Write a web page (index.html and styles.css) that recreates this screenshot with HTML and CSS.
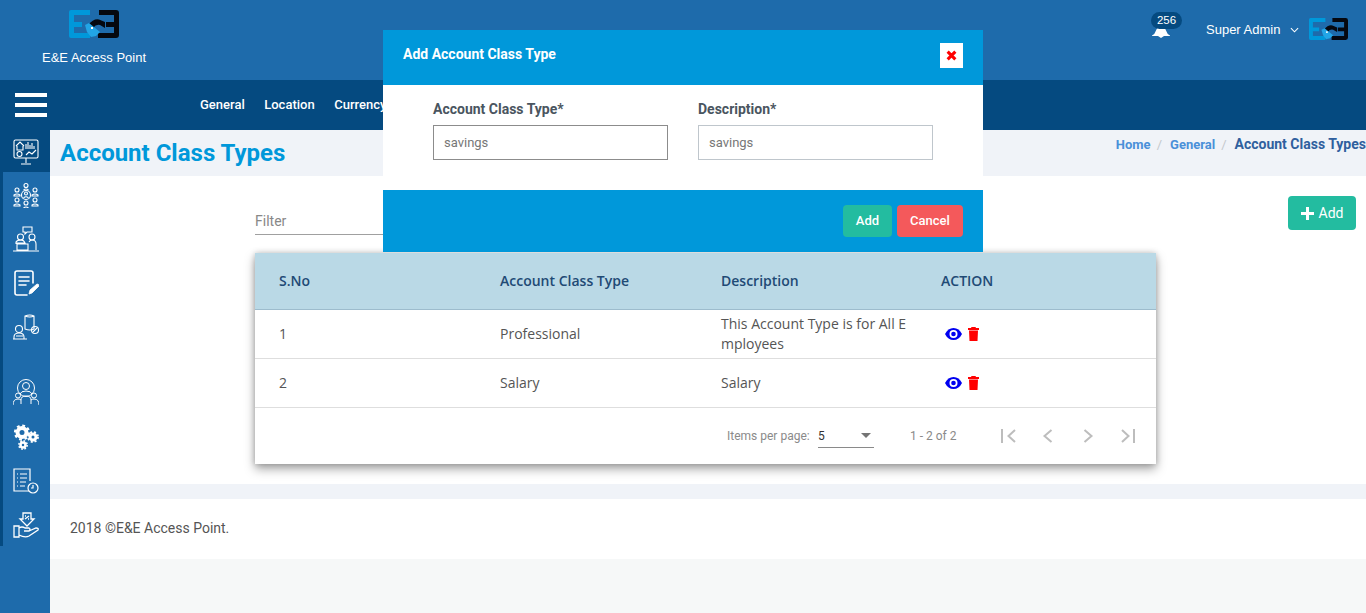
FILE: index.html
```html
<!DOCTYPE html>
<html lang="en">
<head>
<meta charset="utf-8">
<title>Account Class Types</title>
<link rel="stylesheet" href="styles.css">
</head>
<body>
<svg class="defs" width="0" height="0" aria-hidden="true">
  <symbol id="logo" viewBox="0 0 50 28">
    <path d="M21 0H2Q0 0 0 2V26Q0 28 2 28H21V23H5V17H13V12H5V5H21Z" fill="#0098da"/>
    <path d="M30 0H47Q50 0 50 3V25Q50 28 47 28H29V23H45V17H37V12H45V5H30Z" fill="#05080f"/>
    <path d="M19 15Q25 8 30 9.500L36 12L36 18L31 15Q27 14 24 18Z" fill="#05080f"/>
    <path d="M16 15L20 13L31 22L27 26L22 27L18 22Z" fill="#22a5e6"/>
    <path d="M22 17h2v2h-2z" fill="#fff"/>
  </symbol>
</svg>

<header class="topbar">
  <div class="brand">
    <svg class="brand-logo"><use href="#logo"/></svg>
    <span class="brand-name">E&amp;E Access Point</span>
  </div>
  <div class="top-right">
    <div class="bell">
      <svg class="bell-icon" viewBox="0 0 18 11"><path d="M0 8.500Q3 7 4 3.500Q5 0 9 0Q13 0 14 3.500Q15 7 18 8.500V9H0Z" fill="#fff"/><path d="M6 9h6L9 11Z" fill="#fff"/></svg>
      <span class="badge">256</span>
    </div>
    <span class="user">Super Admin</span>
    <svg class="chev" viewBox="0 0 10 6"><path d="M1 1l4 4 4-4" fill="none" stroke="#fff" stroke-width="1.2"/></svg>
    <svg class="user-logo"><use href="#logo"/></svg>
  </div>
</header>

<nav class="navbar">
  <div class="burger"><i></i><i></i><i></i></div>
  <ul class="menu">
    <li>General</li>
    <li>Location</li>
    <li>Currency</li>
  </ul>
</nav>

<div class="layout">
  <aside class="sidebar">
    <div class="side-first">
      <svg class="ico" viewBox="0 0 26 26" fill="none" stroke="#fff" stroke-width="1.1"><rect x="1" y="1" width="24" height="18" rx="1.5"/><path d="M3 7l4-4 4 4M4 7v4h6V7M13 10V5M15 10V3M17 10V6M19 10V4M21 10V7M13 16l3-3 3 2 4-4M4 15a2.500 2.500 0 1 0 5 0a2.500 2.500 0 1 0-5 0M8 25h10M13 19v5"/></svg>
    </div>
    <div class="side-list">
      <div class="side-item"><svg class="ico" viewBox="0 0 26 26" fill="none" stroke="#fff" stroke-width="1.1"><circle cx="13" cy="13" r="4.500"/><circle cx="13" cy="11.500" r="1.500"/><path d="M10.500 16q2.500-2.500 5 0"/><circle cx="13" cy="3.500" r="2"/><path d="M10.500 8q2.500-2 5 0"/><circle cx="4" cy="8" r="2"/><path d="M1 13q3-2 6 0v1H1z"/><circle cx="22" cy="8" r="2"/><path d="M19 13q3-2 6 0v1h-6z"/><circle cx="4" cy="18" r="2"/><path d="M1 23q3-2 6 0v1H1z"/><circle cx="22" cy="18" r="2"/><path d="M19 23q3-2 6 0v1h-6z"/><circle cx="13" cy="21" r="2"/><path d="M10.500 26q2.500-2 5 0"/></svg></div>
      <div class="side-item"><svg class="ico" viewBox="0 0 26 26" fill="none" stroke="#fff" stroke-width="1.1"><path d="M10 1h9v5h-5l-2 2V6h-2z"/><circle cx="7.500" cy="11" r="3"/><circle cx="19" cy="11" r="3"/><path d="M3 18v-2q1-2 5-2 3 0 4 3h-9M16 16q1-2 3-2 4 0 4 4v6M4 18h11v6H4zM0 25h26"/></svg></div>
      <div class="side-item"><svg class="ico" viewBox="0 0 26 26" fill="none" stroke="#fff" stroke-width="1.6"><path d="M14 25H4Q2 25 2 23V3Q2 1 4 1H18Q20 1 20 3V13" stroke-linecap="round"/><path d="M6 7h10M6 11h10M6 15h7" stroke-linecap="round"/><path d="M16 24l1-4 7-6q2 0 2 2l-7 7z" fill="#fff" stroke-width=".8"/></svg></div>
      <div class="side-item"><svg class="ico" viewBox="0 0 26 26" fill="none" stroke="#fff" stroke-width="1.1"><path d="M12 2q5-2 9 0v13q-4 2-9 0zM12 2q5 2 9 0"/><circle cx="22" cy="16" r="3.500"/><path d="M20 18l4-4"/><circle cx="6" cy="15" r="3.500"/><path d="M1 25v-2q0-4 5-4t5 4v2zM0 25h14M3 22h7"/></svg></div>
      <div class="side-item group-two"><svg class="ico" viewBox="0 0 26 26" fill="none" stroke="#fff" stroke-width="1"><circle cx="13" cy="9" r="8.500"/><circle cx="13" cy="7" r="3.500"/><path d="M7 15q1-3 6-3t6 3M8 25v-4q0-4 5-4t5 4v4M0 26q0-6 5-6 2 0 3 1M26 26q0-6-5-6-2 0-3 1"/><circle cx="5" cy="16.500" r="2.500"/><circle cx="21" cy="16.500" r="2.500"/></svg></div>
      <div class="side-item after-two"><svg class="ico" viewBox="0 0 26 26"><g fill="none" stroke="#fff"><circle cx="9" cy="8.500" r="4.500" stroke-width="4"/><circle cx="9" cy="8.500" r="7" stroke-width="2.200" stroke-dasharray="2.800 2.700"/><circle cx="20" cy="13" r="3" stroke-width="3"/><circle cx="20" cy="13" r="5" stroke-width="1.800" stroke-dasharray="2 2"/><circle cx="10" cy="21" r="2.500" stroke-width="2.500"/><circle cx="10" cy="21" r="4.200" stroke-width="1.500" stroke-dasharray="1.700 1.600"/></g></svg></div>
      <div class="side-item"><svg class="ico" viewBox="0 0 26 26" fill="none" stroke="#fff" stroke-width="1.200"><path d="M16 23H1V1h16v12"/><path d="M4 6h1M4 10h1M4 14h1M4 18h1M7 6h7M7 10h7M7 14h6M7 18h5"/><circle cx="20" cy="20" r="5"/><path d="M20 17v3h-2"/></svg></div>
      <div class="side-item"><svg class="ico" viewBox="0 0 26 26" fill="none" stroke="#fff" stroke-width="1.300"><path d="M10 1h8v6h3l-7 7-7-7h3z"/><path d="M12 7l4-3M12 4h1M15 7h1"/><path d="M1 14h5v11H1zM6 16q3-2 6 0h4q2 1 0 3h-5M6 23q6 3 10 1l9-6q1-2-2-2l-7 3"/></svg></div>
    </div>
  </aside>

  <main class="main">
    <div class="title-band">
      <h1 class="page-title">Account Class Types</h1>
      <ol class="crumbs">
        <li class="crumb">Home</li>
        <li class="sep">/</li>
        <li class="crumb">General</li>
        <li class="sep">/</li>
        <li class="crumb-now">Account Class Types</li>
      </ol>
    </div>

    <section class="content">
      <div class="tools">
        <div class="filter">Filter</div>
        <button class="add-btn" type="button"><svg class="plus" viewBox="0 0 13 13"><path d="M5 0h3v5h5v3H8v5H5V8H0V5h5z" fill="#fff"/></svg>Add</button>
      </div>

      <div class="card">
        <div class="row head">
          <div>S.No</div><div>Account Class Type</div><div>Description</div><div>ACTION</div>
        </div>
        <div class="row">
          <div>1</div><div>Professional</div><div class="desc">This Account Type is for All Employees</div>
          <div class="actions">
            <svg class="eye" viewBox="0 0 17 12"><path d="M8.500 0Q14 0 17 6Q14 12 8.500 12Q3 12 0 6Q3 0 8.500 0Z" fill="#0000f0"/><circle cx="8.500" cy="6" r="4" fill="#fff"/><circle cx="8.500" cy="6" r="2.300" fill="#0000f0"/></svg>
            <svg class="bin" viewBox="0 0 11 14"><path d="M3.500 0h4l.5 1h3v2H0V1h3zM1 3.500h9L9.500 14h-8z" fill="#f00"/></svg>
          </div>
        </div>
        <div class="row">
          <div>2</div><div>Salary</div><div class="desc">Salary</div>
          <div class="actions">
            <svg class="eye" viewBox="0 0 17 12"><path d="M8.500 0Q14 0 17 6Q14 12 8.500 12Q3 12 0 6Q3 0 8.500 0Z" fill="#0000f0"/><circle cx="8.500" cy="6" r="4" fill="#fff"/><circle cx="8.500" cy="6" r="2.300" fill="#0000f0"/></svg>
            <svg class="bin" viewBox="0 0 11 14"><path d="M3.500 0h4l.5 1h3v2H0V1h3zM1 3.500h9L9.500 14h-8z" fill="#f00"/></svg>
          </div>
        </div>
        <div class="pager">
          <span class="pg-label">Items per page:</span>
          <div class="pg-select"><span>5</span><i class="caret"></i></div>
          <span class="pg-range">1 - 2 of 2</span>
          <div class="pg-btns">
            <svg viewBox="0 0 16 14"><rect x="1" y="0" width="2" height="14" fill="#bdbdbd"/><path d="M15 1L8.500 7 15 13" fill="none" stroke="#bdbdbd" stroke-width="2"/></svg>
            <svg viewBox="0 0 16 14"><path d="M11.500 1L4.500 7l7 6" fill="none" stroke="#bdbdbd" stroke-width="2"/></svg>
            <svg viewBox="0 0 16 14"><path d="M4.500 1l7 6-7 6" fill="none" stroke="#bdbdbd" stroke-width="2"/></svg>
            <svg viewBox="0 0 16 14"><path d="M2 1l6.500 6L2 13" fill="none" stroke="#bdbdbd" stroke-width="2"/><rect x="13" y="0" width="2" height="14" fill="#bdbdbd"/></svg>
          </div>
        </div>
      </div>
    </section>

    <div class="foot-band"></div>
    <footer class="footer">2018 ©E&amp;E Access Point.</footer>
    <div class="page-end"></div>
  </main>
</div>

<div class="modal">
  <div class="modal-head">
    <h2 class="modal-title">Add Account Class Type</h2>
    <button class="close" type="button"><svg viewBox="0 0 10 10"><path d="M1.500 1.500l7 7M8.500 1.500l-7 7" stroke="#f00" stroke-width="2.800"/></svg></button>
  </div>
  <div class="modal-body">
    <label class="field">
      <span class="field-label">Account Class Type*</span>
      <input class="input focus" type="text" value="savings">
    </label>
    <label class="field">
      <span class="field-label">Description*</span>
      <input class="input" type="text" value="savings">
    </label>
  </div>
  <div class="modal-foot">
    <button class="btn ok" type="button">Add</button>
    <button class="btn cancel" type="button">Cancel</button>
  </div>
</div>
</body>
</html>
```
FILE: styles.css
```css
* { box-sizing: border-box; }
html, body { margin: 0; height: 613px; overflow: hidden; }
body { font-family: Roboto, "Liberation Sans", sans-serif; background: #f6f8f8; position: relative; }
.defs { position: absolute; }

.topbar { height: 80px; background: #1e6bab; display: flex; justify-content: space-between; color: #fff; }
.brand { width: 188px; display: flex; flex-direction: column; align-items: center; padding-top: 10px; }
.brand-logo { width: 50px; height: 28px; display: block; }
.brand-name { font-family: "Liberation Sans", Arial, sans-serif; font-size: 13px; line-height: 16px; margin-top: 12px; }
.top-right { display: flex; align-items: flex-start; padding: 12px 18px 0 0; }
.bell { width: 31px; height: 27px; position: relative; margin-right: 24px; }
.badge { display: block; position: relative; width: 31px; height: 17px; border-radius: 9px; background: #054a80; font-family: "Liberation Sans", Arial, sans-serif; font-size: 11.500px; line-height: 17px; text-align: center; }
.bell-icon { position: absolute; left: 1px; top: 15px; width: 18px; height: 11px; }
.user { font-family: "Liberation Sans", Arial, sans-serif; font-size: 13px; line-height: 16px; margin-top: 10px; width: 83px; white-space: nowrap; }
.chev { width: 9px; height: 6px; margin: 15px 0 0 1px; }
.user-logo { width: 39px; height: 22px; margin: 6px 0 0 10px; }

.navbar { height: 50px; background: #054a80; display: flex; align-items: center; color: #fff; }
.burger { width: 32px; margin-left: 15px; display: flex; flex-direction: column; gap: 6px; }
.burger i { display: block; height: 4px; background: #fff; }
.menu { list-style: none; margin: 0 0 0 153px; padding: 0; display: flex; gap: 19.500px; font-size: 13px; font-weight: 500; line-height: 16px; }

.layout { display: flex; height: 483px; }
.sidebar { width: 50px; flex: none; background: #1e6bab; }
.side-first { height: 42px; background: #054a80; display: flex; align-items: center; padding: 2px 0 0 13px; }
.side-list { height: 374px; border-left: 3px solid #054a80; padding-top: 1px; }
.side-item { height: 44px; display: flex; align-items: center; padding-left: 10px; }
.side-item.group-two { margin-top: 21px; }
.side-item.after-two { margin-top: 1px; }
.ico { width: 26px; height: 26px; display: block; }

.main { flex: 1; min-width: 0; display: flex; flex-direction: column; }
.title-band { height: 46px; background: #f0f3f8; display: flex; justify-content: space-between; padding-left: 10px; }
.page-title { margin: 6px 0 0; font-size: 24px; line-height: 34px; font-weight: 700; color: #0098da; }
.crumbs { list-style: none; margin: 0; padding: 6px 0 0; display: flex; font-size: 13px; line-height: 17px; font-weight: 700; white-space: nowrap; }
.crumb { color: #4a90d9; }
.sep { color: #c4c8cc; font-weight: 400; margin: 0 8px 0 6px; }
.crumb-now { color: #2f5f9e; font-size: 14px; }

.content { height: 308px; background: #fff; display: flex; flex-direction: column; }
.tools { height: 77px; position: relative; display: flex; justify-content: space-between; padding: 20px 10px 0 205px; }
.filter { width: 130px; height: 39px; border-bottom: 1px solid #a0a0a0; font-family: Roboto, sans-serif; font-size: 14px; color: #888; padding-top: 16px; line-height: 18px; }
.add-btn { width: 68px; height: 34px; border: 0; border-radius: 4px; background: #23bca0; color: #fff; font-family: Roboto, sans-serif; font-size: 14px; display: flex; align-items: center; justify-content: center; gap: 5px; padding: 0; }
.plus { width: 13px; height: 13px; }

.card { width: 901px; margin-left: 205px; background: #fff; box-shadow: 0 5px 10px rgba(0,0,0,.35), 0 0 6px rgba(0,0,0,.2); font-family: "Open Sans", sans-serif; font-size: 14px; color: #555; }
.row { display: grid; grid-template-columns: 221px 221px 220px 1fr; align-items: center; height: 49px; padding-left: 24px; border-bottom: 1px solid #dedede; line-height: 20px; }
.row.head { height: 57px; background: #bad9e6; border-bottom-color: #9dbccd; font-weight: 600; color: #1f4a75; }
.desc { width: 190px; word-break: break-all; }
.actions { display: flex; align-items: center; gap: 6px; padding-left: 4px; }
.eye { width: 17px; height: 12px; }
.bin { width: 11px; height: 14px; }
.pager { height: 56px; display: flex; align-items: center; font-family: Roboto, sans-serif; font-size: 12px; color: #8a8a8a; padding-left: 472px; }
.pg-label { width: 91px; }
.pg-select { width: 56px; height: 24px; border-bottom: 1px solid #8a8a8a; display: flex; justify-content: space-between; align-items: center; color: #333; padding-right: 3px; }
.caret { width: 0; height: 0; border: 5px solid transparent; border-top: 5px solid #757575; border-bottom: 0; }
.pg-range { margin-left: 36px; width: 90px; }
.pg-btns { display: flex; gap: 24px; }
.pg-btns svg { width: 16px; height: 14px; display: block; }

.foot-band { height: 15px; background: #f0f3f8; }
.footer { height: 60px; background: #fff; padding: 20px 0 0 20px; font-family: Roboto, sans-serif; font-size: 14px; line-height: 18px; color: #555; }
.page-end { flex: 1; background: #f6f8f8; }

.modal { position: absolute; left: 383px; top: 30px; width: 600px; height: 222px; display: flex; flex-direction: column; background: #fff; }
.modal-head { height: 55px; background: #0098da; display: flex; justify-content: space-between; padding: 12px 20px 0; }
.modal-title { margin: 0; font-size: 14px; line-height: 24px; font-weight: 700; color: #fff; }
.close { width: 23px; height: 25px; margin-top: 1px; border: 0; background: #fff; padding: 0; display: flex; align-items: center; justify-content: center; }
.close svg { width: 11px; height: 11px; }
.modal-body { height: 105px; display: flex; gap: 30px; padding: 15px 50px 0; }
.field { width: 235px; display: flex; flex-direction: column; }
.field-label { font-size: 14px; line-height: 18px; font-weight: 700; color: #4a5560; margin-bottom: 7px; }
.input { width: 235px; height: 35px; border: 1px solid #bfc6cc; padding: 0 10px; font-family: Roboto, sans-serif; font-size: 13px; color: #777; background: #fff; outline: 0; }
.input.focus { border-color: #8c8c8c; }
.modal-foot { height: 62px; background: #0098da; display: flex; justify-content: flex-end; gap: 5px; padding: 15px 20px 0; }
.btn { height: 32px; border: 0; border-radius: 4px; padding: 0 0 2px; color: #fff; font-family: Roboto, sans-serif; font-size: 13px; font-weight: 500; }
.ok { width: 49px; background: #23bca0; }
.cancel { width: 66px; background: #f4595b; }
```
